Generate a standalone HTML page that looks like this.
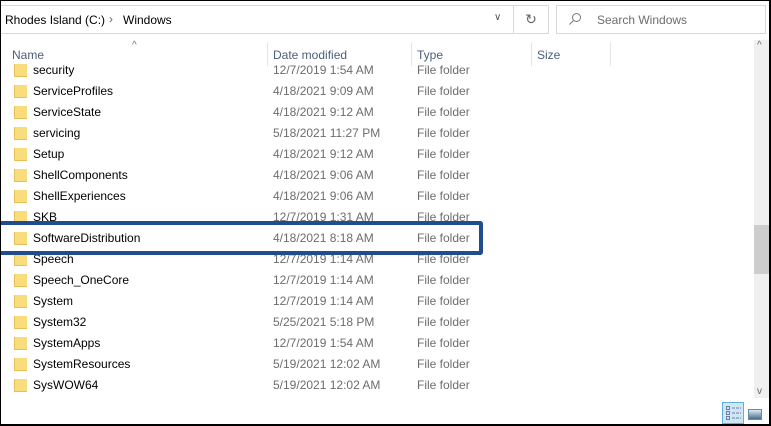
<!DOCTYPE html><html><head><style>
*{margin:0;padding:0;box-sizing:border-box}
body{width:771px;height:426px;overflow:hidden;background:#fff;font-family:"Liberation Sans",sans-serif;font-size:12px;color:#000;position:relative}
.frame{position:absolute;left:0;top:0;width:771px;height:426px;border:1px solid #000;border-bottom-width:2px;border-right-width:2px}
.addr{position:absolute;left:1px;top:5px;width:513px;height:29px;border:1px solid #d9d9d9;border-left:none}
.ref{position:absolute;left:514px;top:5px;width:35px;height:29px;border:1px solid #d9d9d9;border-left:none;color:#666;text-align:center;line-height:27px;font-size:14px}
.search{position:absolute;left:556px;top:5px;width:210px;height:29px;border:1px solid #d9d9d9}
.t{position:absolute;white-space:nowrap}
.hdr{color:#4c607a;font-size:12px}
.sep{position:absolute;top:42px;width:1px;height:24px;background:#e5e5e5}
.list{position:absolute;left:0;top:64px;width:752px;height:334px;overflow:hidden}
.row{position:absolute;left:0;height:21px;width:752px}
.row .ic{position:absolute;left:14px;top:4px;width:13px;height:13px;background:#f9dd7c;border-left:1px solid #e8c05a;border-bottom:1px solid #e8c05a}
.row span{position:absolute;top:3px;white-space:nowrap}
.n{left:33px}.d{left:273px;color:#6d6d6d}.ty{left:417px;color:#6d6d6d}
.sb{position:absolute;left:754px;top:40px;width:15px;height:358px;background:#f0f0f0}
.thumb{position:absolute;left:754px;top:225px;width:15px;height:49px;background:#cdcdcd}
.hl{position:absolute;left:0;top:221px;width:483px;height:34px;border:4px solid #1f4d8e;border-left:none;border-radius:0 3px 3px 0}
</style></head><body>
<div class="addr"></div>
<div class="t" style="left:5px;top:13px">Rhodes Island (C:)</div>
<div class="t" style="left:109px;top:12px;color:#666">›</div>
<div class="t" style="left:123px;top:13px">Windows</div>
<div class="t" style="left:494px;top:12px;color:#555;font-size:10px">∨</div>
<div class="ref">↻</div>
<div class="search"></div>
<svg style="position:absolute;left:568px;top:12px" width="14" height="14"><circle cx="8.5" cy="5.5" r="4" fill="none" stroke="#777" stroke-width="1"/><line x1="5.5" y1="8.5" x2="1.5" y2="12.5" stroke="#777"/></svg>
<div class="t" style="left:597px;top:13px;color:#6d6d6d">Search Windows</div>
<div class="t" style="left:132px;top:40px;color:#777;font-size:10px">^</div>
<div class="t hdr" style="left:12px;top:48px">Name</div>
<div class="t hdr" style="left:273px;top:48px">Date modified</div>
<div class="t hdr" style="left:417px;top:48px">Type</div>
<div class="t hdr" style="left:537px;top:48px">Size</div>
<div class="sep" style="left:267px"></div><div class="sep" style="left:411px"></div><div class="sep" style="left:531px"></div><div class="sep" style="left:610px"></div>
<div class="list">
<div class="row" style="top:-4px"><i class="ic"></i><span class="n">security</span><span class="d">12/7/2019 1:54 AM</span><span class="ty">File folder</span></div>
<div class="row" style="top:17px"><i class="ic"></i><span class="n">ServiceProfiles</span><span class="d">4/18/2021 9:09 AM</span><span class="ty">File folder</span></div>
<div class="row" style="top:38px"><i class="ic"></i><span class="n">ServiceState</span><span class="d">4/18/2021 9:12 AM</span><span class="ty">File folder</span></div>
<div class="row" style="top:59px"><i class="ic"></i><span class="n">servicing</span><span class="d">5/18/2021 11:27 PM</span><span class="ty">File folder</span></div>
<div class="row" style="top:80px"><i class="ic"></i><span class="n">Setup</span><span class="d">4/18/2021 9:12 AM</span><span class="ty">File folder</span></div>
<div class="row" style="top:101px"><i class="ic"></i><span class="n">ShellComponents</span><span class="d">4/18/2021 9:06 AM</span><span class="ty">File folder</span></div>
<div class="row" style="top:122px"><i class="ic"></i><span class="n">ShellExperiences</span><span class="d">4/18/2021 9:06 AM</span><span class="ty">File folder</span></div>
<div class="row" style="top:143px"><i class="ic"></i><span class="n">SKB</span><span class="d">12/7/2019 1:31 AM</span><span class="ty">File folder</span></div>
<div class="row" style="top:164px"><i class="ic"></i><span class="n">SoftwareDistribution</span><span class="d">4/18/2021 8:18 AM</span><span class="ty">File folder</span></div>
<div class="row" style="top:185px"><i class="ic"></i><span class="n">Speech</span><span class="d">12/7/2019 1:14 AM</span><span class="ty">File folder</span></div>
<div class="row" style="top:206px"><i class="ic"></i><span class="n">Speech_OneCore</span><span class="d">12/7/2019 1:14 AM</span><span class="ty">File folder</span></div>
<div class="row" style="top:227px"><i class="ic"></i><span class="n">System</span><span class="d">12/7/2019 1:14 AM</span><span class="ty">File folder</span></div>
<div class="row" style="top:248px"><i class="ic"></i><span class="n">System32</span><span class="d">5/25/2021 5:18 PM</span><span class="ty">File folder</span></div>
<div class="row" style="top:269px"><i class="ic"></i><span class="n">SystemApps</span><span class="d">12/7/2019 1:54 AM</span><span class="ty">File folder</span></div>
<div class="row" style="top:290px"><i class="ic"></i><span class="n">SystemResources</span><span class="d">5/19/2021 12:02 AM</span><span class="ty">File folder</span></div>
<div class="row" style="top:311px"><i class="ic"></i><span class="n">SysWOW64</span><span class="d">5/19/2021 12:02 AM</span><span class="ty">File folder</span></div>
<div class="row" style="top:332px"><i class="ic"></i><span class="n">TAPI</span><span class="d">12/7/2019 1:14 AM</span><span class="ty">File folder</span></div>
</div>
<div class="hl"></div>
<div class="sb"></div><div class="thumb"></div>
<div class="t" style="left:757px;top:40px;color:#666;font-size:10px">^</div>
<div class="t" style="left:757px;top:386px;color:#666;font-size:10px">v</div>
<div style="position:absolute;left:722px;top:402px;width:22px;height:22px;background:#cce8f7;border:1px solid #5fb0e0"></div>
<svg style="position:absolute;left:726px;top:406px" width="16" height="14"><g fill="none" stroke="#7a7a9a"><rect x="0.5" y="0.5" width="3" height="3"/><rect x="0.5" y="5.5" width="3" height="3"/><rect x="0.5" y="10.5" width="3" height="3"/><line x1="6" y1="2" x2="15" y2="2" stroke-dasharray="3 1"/><line x1="6" y1="7" x2="15" y2="7" stroke-dasharray="3 1"/><line x1="6" y1="12" x2="15" y2="12" stroke-dasharray="3 1"/></g></svg>
<div style="position:absolute;left:748px;top:409px;width:14px;height:11px;border:1px solid #6a8aa8;background:linear-gradient(#dde8f2,#4a6e90)"></div>
<div class="frame"></div>
</body></html>
